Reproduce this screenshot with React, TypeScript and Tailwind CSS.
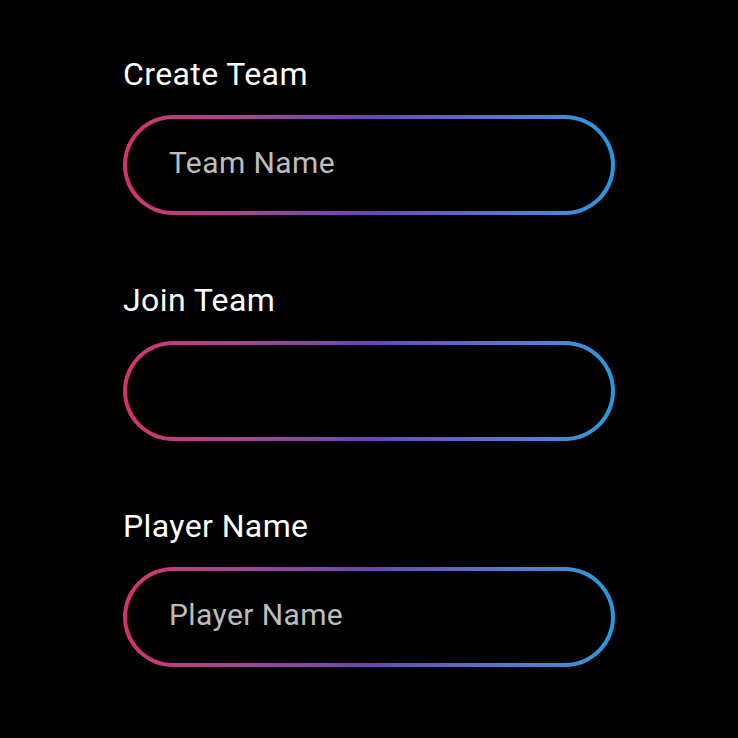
import React from 'react';

const fields = [
  { label: 'Create Team', placeholder: 'Team Name' },
  { label: 'Join Team', placeholder: '' },
  { label: 'Player Name', placeholder: 'Player Name' },
];

const App: React.FC = () => {
  return (
    <div
      className="min-h-[738px] w-full bg-black pt-[57px] pl-[123px]"
      style={{ fontFamily: 'Roboto, "Noto Sans", sans-serif' }}
    >
      <div className="flex w-[492px] flex-col gap-[68px]">
        {fields.map((f) => (
          <div key={f.label} className="flex flex-col">
            <label className="mb-[24px] text-[32px] leading-[34px] tracking-[0.4px] text-white">{f.label}</label>
            {/* gradient outline */}
            <div className="h-[100px] rounded-full bg-gradient-to-r from-[#d6306a] via-[#6a44b6] to-[#1e9be0] p-[4px]">
              <input
                className="h-full w-full rounded-full bg-black pl-[42px] pb-[5px] text-[30px] tracking-[0.4px] text-white outline-none placeholder:text-[#bdbdbd]"
                placeholder={f.placeholder}
              />
            </div>
          </div>
        ))}
      </div>
    </div>
  );
};

export default App;
